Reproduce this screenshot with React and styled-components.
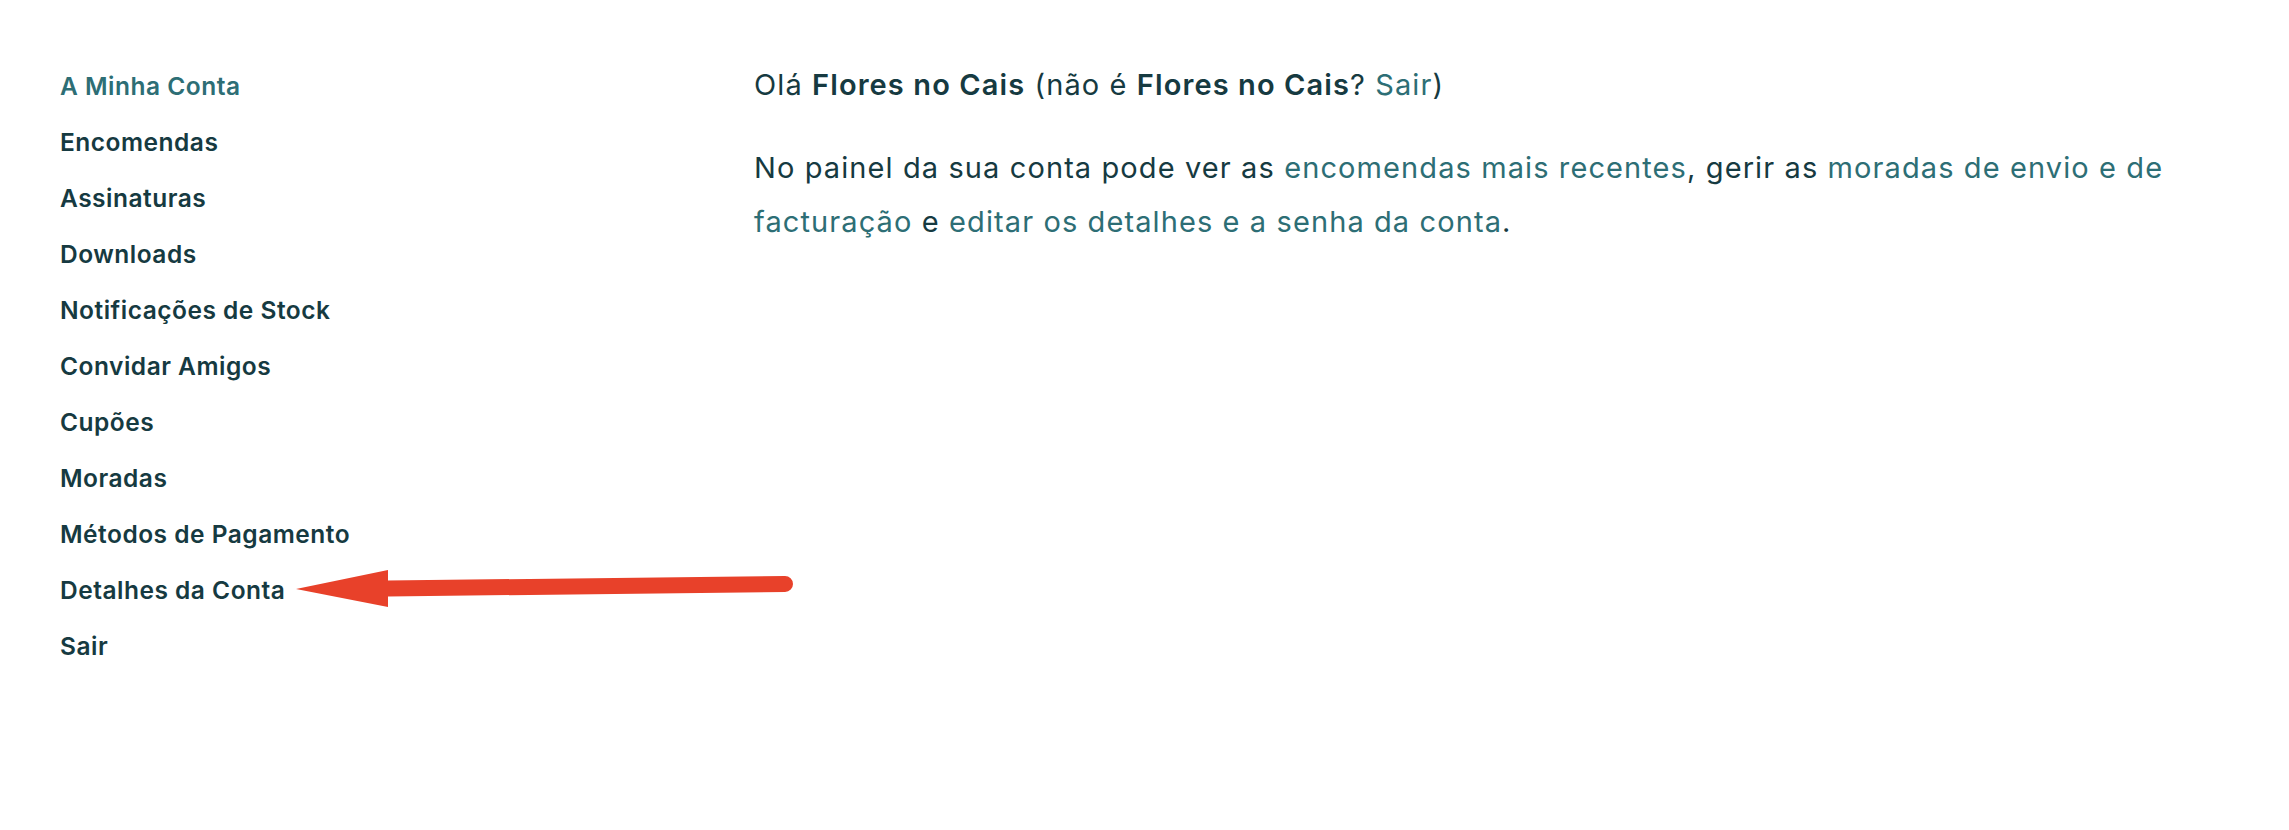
import React from 'react';
import styled, { createGlobalStyle } from 'styled-components';

const menu = [
    'A Minha Conta',
    'Encomendas',
    'Assinaturas',
    'Downloads',
    'Notificações de Stock',
    'Convidar Amigos',
    'Cupões',
    'Moradas',
    'Métodos de Pagamento',
    'Detalhes da Conta',
    'Sair',
];

const Arrow = () => (
    <ArrowMark viewBox="0 0 520 60" width="520" height="60">
        <line x1="108" y1="28.5" x2="505" y2="24" stroke="#e8412a" strokeWidth="16" strokeLinecap="round" />
        <polygon points="16,29 108,10 108,47" fill="#e8412a" />
    </ArrowMark>
);

const App = () => (
    <>
        <GlobalStyle />
        <Page>
            <Nav>
                {menu.map((item, i) => (
                    <NavItem key={item} active={i === 0}>
                        {item}
                    </NavItem>
                ))}
            </Nav>
            <Content>
                <Para>
                    Olá <strong>Flores no Cais</strong> (não é <strong>Flores no Cais</strong>?{' '}
                    <TextLink>Sair</TextLink>)
                </Para>
                <Para>
                    No painel da sua conta pode ver as <TextLink>encomendas mais recentes</TextLink>, gerir as{' '}
                    <TextLink>moradas de envio e de facturação</TextLink> e{' '}
                    <TextLink>editar os detalhes e a senha da conta</TextLink>.
                </Para>
            </Content>
            <Arrow />
        </Page>
    </>
);

const GlobalStyle = createGlobalStyle`
    body {
        margin: 0;
        background: #ffffff;
        font-family: Inter, "Liberation Sans", sans-serif;
        color: #163a41;
    }
`;

const Page = styled.div`
    position: relative;
    display: flex;
    padding: 58px 60px 0 60px;
    min-height: 772px;
`;

const Nav = styled.ul`
    flex: 0 0 694px;
    margin: 0;
    padding: 0;
    list-style: none;
`;

const NavItem = styled.li`
    font-size: 24.5px;
    font-weight: 600;
    line-height: 56px;
    letter-spacing: 0.5px;
    color: ${props => (props.active ? '#2d6e75' : '#163a41')};
`;

const Content = styled.div`
    flex: 1;
    font-size: 29px;
    line-height: 54px;
    letter-spacing: 1.1px;
`;

const Para = styled.p`
    margin: 0 0 29px;

    strong {
        font-weight: 600;
    }
`;

const TextLink = styled.a`
    color: #2d6e75;
    text-decoration: none;
    cursor: pointer;
`;

const ArrowMark = styled.svg`
    position: absolute;
    left: 280px;
    top: 560px;
`;

export default App;
